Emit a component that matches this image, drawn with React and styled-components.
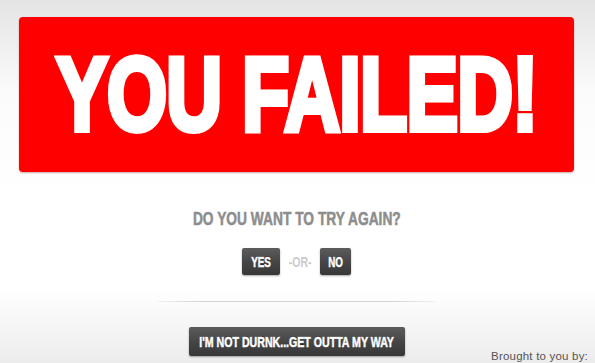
import React from 'react';
import styled, { createGlobalStyle } from 'styled-components';

const GlobalStyle = createGlobalStyle`
  html, body {
    margin: 0;
    padding: 0;
  }
  body {
    background: #fff;
  }
`;

const Page = styled.div`
  box-sizing: border-box;
  width: 595px;
  height: 363px;
  overflow: hidden;
  padding: 17px 21px 0 19px;
  display: flex;
  flex-direction: column;
  align-items: center;
  background: linear-gradient(
    to bottom,
    #e4e4e4 0px,
    #fbfbfb 90px,
    #ffffff 200px,
    #ffffff 290px,
    #ececec 363px
  );
`;

const Banner = styled.div`
  box-sizing: border-box;
  width: 100%;
  height: 155px;
  background: #fe0000;
  border-radius: 4px;
  box-shadow: 0 1px 2px rgba(120, 0, 0, 0.35);
  display: flex;
  align-items: center;
  justify-content: center;
`;

// condensed headline type: the squeeze is a transform, so trim margins keep
// the layout box close to the drawn width
const Squeeze = styled.span`
  display: inline-block;
  white-space: nowrap;
  font-family: 'Liberation Sans', Arial, sans-serif;
  font-weight: 700;
  line-height: 1;
  transform: scaleX(${(p) => p.$scale});
  transform-origin: center;
  margin: 0 ${(p) => p.$trim || 0}px;
`;

const Title = styled(Squeeze)`
  color: #fff;
  font-size: 103px;
  letter-spacing: -1px;
  -webkit-text-stroke: 6px #fff;
`;

const Question = styled(Squeeze)`
  color: #8d8d8d;
  font-size: 18px;
  margin-top: 38px;
  -webkit-text-stroke: 0.5px #8d8d8d;
  text-shadow: 0 1px 0 #fff;
`;

const Choices = styled.div`
  display: flex;
  align-items: center;
  gap: 8px;
  margin-top: 20px;
`;

const DarkButton = styled.button`
  box-sizing: border-box;
  height: ${(p) => p.$height}px;
  width: ${(p) => p.$width}px;
  padding: 0;
  border: none;
  border-radius: 2px;
  background: linear-gradient(to bottom, #5c5c5c 0%, #444 55%, #383838 100%);
  box-shadow: 0 1px 2px rgba(0, 0, 0, 0.35);
  display: flex;
  align-items: center;
  justify-content: center;
  cursor: pointer;
`;

const ButtonLabel = styled(Squeeze)`
  color: #fff;
  font-size: ${(p) => p.$size}px;
  -webkit-text-stroke: 0.5px #fff;
  text-shadow: 0 -1px 0 rgba(0, 0, 0, 0.5);
`;

const Or = styled(Squeeze)`
  color: #cbcbcb;
  font-size: 14px;
`;

const Divider = styled.hr`
  width: 280px;
  height: 1px;
  border: none;
  margin: 26px 0 0;
  background: linear-gradient(
    to right,
    rgba(210, 210, 210, 0.2),
    #d4d4d4 15%,
    #d4d4d4 85%,
    rgba(210, 210, 210, 0.2)
  );
`;

const Footer = styled.div`
  width: 595px;
  margin-top: 25px;
  display: grid;
  grid-template-columns: 1fr auto 1fr;
  align-items: end;
`;

const Credit = styled.div`
  justify-self: end;
  padding-right: 6px;
  margin-bottom: -6px;
  font-family: 'Liberation Sans', Arial, sans-serif;
  font-size: 11.5px;
  letter-spacing: 0.2px;
  line-height: 12px;
  color: #555;
`;

export default function App() {
  return (
    <>
      <GlobalStyle />
      <Page>
        <Banner>
          <Title $scale={0.75} $trim={-110}>YOU FAILED!</Title>
        </Banner>
        <Question $scale={0.765}>DO YOU WANT TO TRY AGAIN?</Question>
        <Choices>
          <DarkButton $width={38} $height={27}>
            <ButtonLabel $size={14} $scale={0.7}>YES</ButtonLabel>
          </DarkButton>
          <Or $scale={0.75} $trim={-3.5}>-OR-</Or>
          <DarkButton $width={31} $height={27}>
            <ButtonLabel $size={14} $scale={0.7}>NO</ButtonLabel>
          </DarkButton>
        </Choices>
        <Divider />
        <Footer>
          <span />
          <DarkButton $width={216} $height={29}>
            <ButtonLabel $size={15} $scale={0.707} $trim={-40}>
              I'M NOT DURNK...GET OUTTA MY WAY
            </ButtonLabel>
          </DarkButton>
          <Credit>Brought to you by:</Credit>
        </Footer>
      </Page>
    </>
  );
}
